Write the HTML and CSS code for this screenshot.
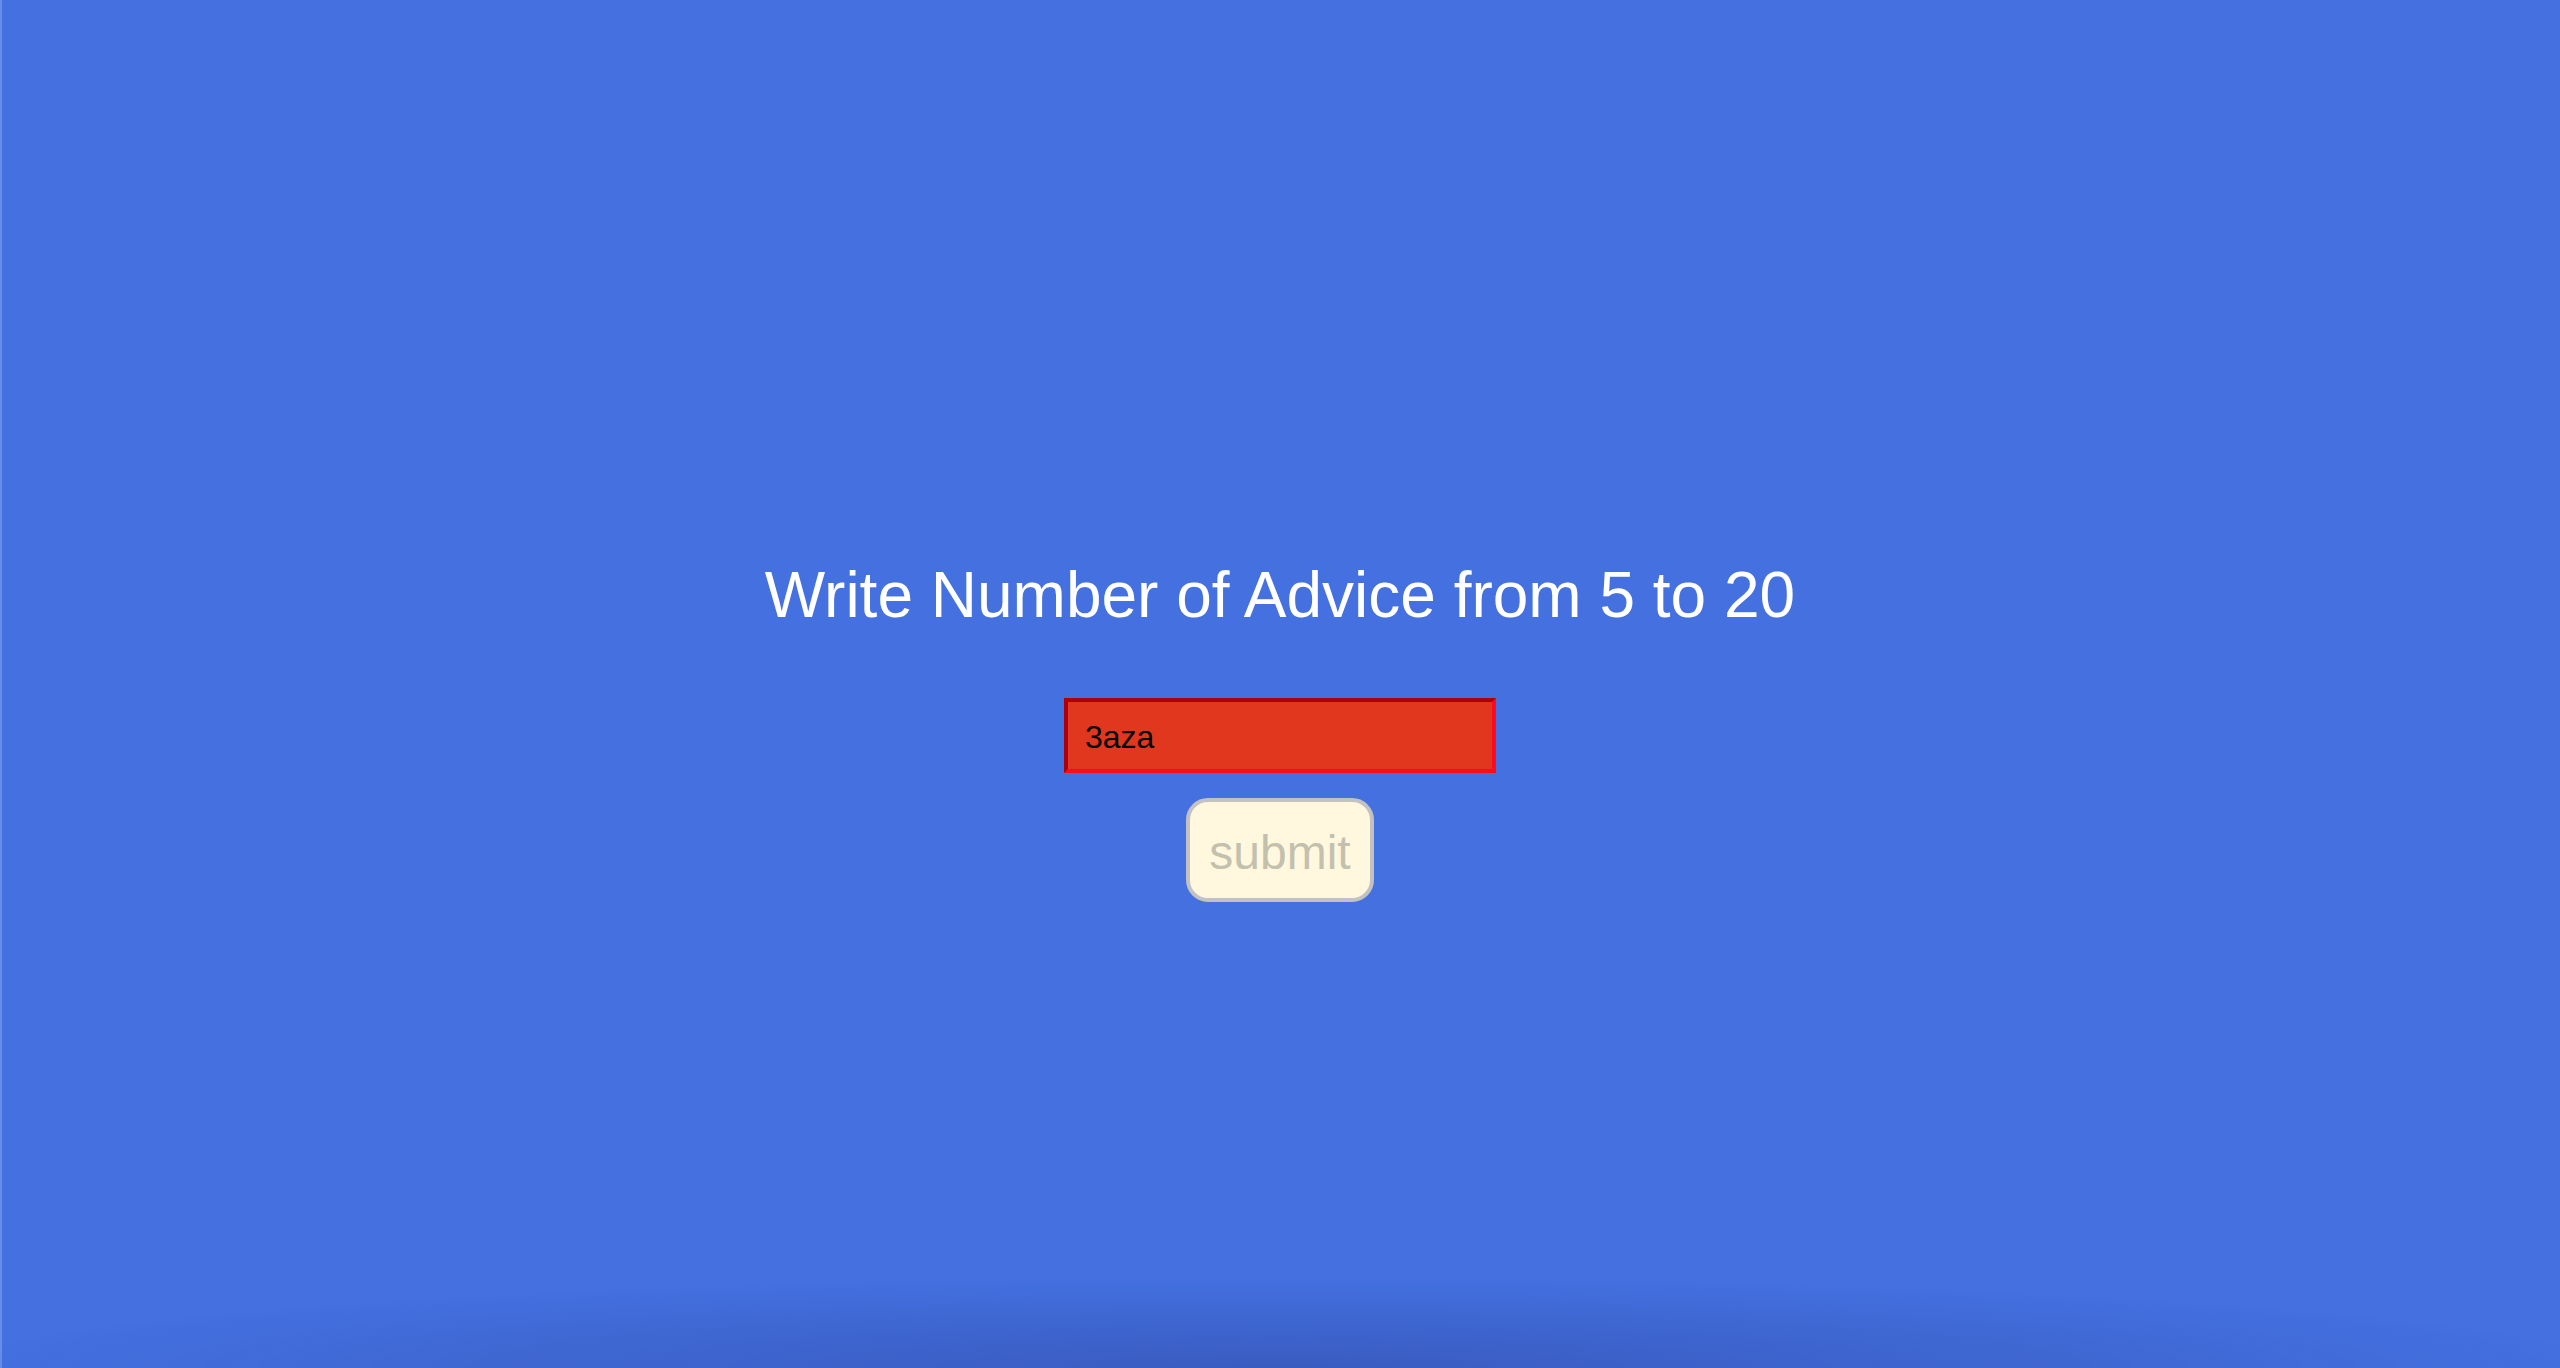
FILE: index.html
```html
<!DOCTYPE html>
<html lang="en">
<head>
<meta charset="utf-8">
<title>Advice</title>
<link rel="stylesheet" href="styles.css">
</head>
<body>
<main class="page">
  <h1 class="title">Write Number of Advice from 5 to 20</h1>
  <input class="count-input" type="text" value="3aza">
  <button class="submit-btn" disabled>submit</button>
</main>
<div class="bottom-shade"></div>
</body>
</html>
```
FILE: styles.css
```css
html, body {
  margin: 0;
  padding: 0;
  height: 100%;
}
body {
  background: #4470e0;
  font-family: "Liberation Sans", Arial, Helvetica, sans-serif;
  box-shadow: inset 2px 0 0 #6a8cea;
  overflow: hidden;
}
.page {
  display: flex;
  flex-direction: column;
  align-items: center;
  padding-top: 558px;
}
.title {
  margin: 0;
  color: #ffffff;
  font-weight: normal;
  font-size: 64px;
  line-height: 74px;
  margin-bottom: 66px;
}
.count-input {
  box-sizing: border-box;
  width: 432px;
  height: 75px;
  margin: 0;
  padding: 3px 17px 0;
  border: 4px solid #ff0a20;
  border-top-color: #ab000c;
  border-left-color: #ab000c;
  background: #e0371e;
  color: #000;
  font-family: "Liberation Sans", Arial, sans-serif;
  font-size: 32px;
  outline: none;
}
.submit-btn {
  box-sizing: border-box;
  margin-top: 25px;
  width: 188px;
  height: 104px;
  border: 4px solid #c2c2c2;
  border-radius: 22px;
  background: #fff8de;
  color: #c4c0ae;
  font-family: "Liberation Sans", Arial, sans-serif;
  font-size: 48px;
  padding: 4px 0 0;
}
.bottom-shade {
  position: fixed;
  left: 0;
  right: 0;
  bottom: 0;
  height: 90px;
  pointer-events: none;
  background: radial-gradient(ellipse 52% 100% at 50% 100%, rgba(30, 40, 110, 0.28), rgba(30, 40, 110, 0) 100%);
}
```
